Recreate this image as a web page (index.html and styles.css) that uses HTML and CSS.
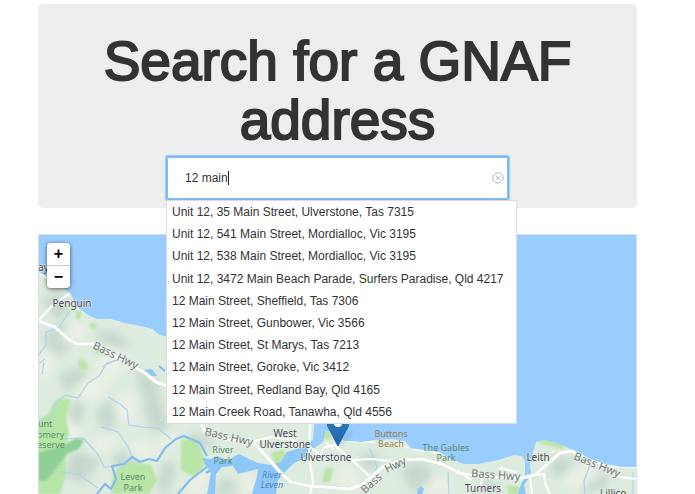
FILE: index.html
```html
<!DOCTYPE html>
<html lang="en">
<head>
<meta charset="utf-8">
<meta name="viewport" content="width=device-width, initial-scale=1">
<title>Search for a GNAF address</title>
<link rel="stylesheet" href="styles.css">
</head>
<body>
<main class="page">
  <header class="hero">
    <h1><label for="address">Search for a GNAF address</label></h1>
    <div class="search">
      <input class="search-input" id="address" type="text" value="12 main" autocomplete="off">
      <span class="caret"></span>
      <button class="clear" type="button" aria-label="Clear">
        <svg viewBox="0 0 12 12" aria-hidden="true"><circle cx="6" cy="6" r="5.2"/><path d="M4.2 4.2l3.6 3.6M7.8 4.2L4.2 7.8"/></svg>
      </button>
      <ul class="suggestions">
        <li>Unit 12, 35 Main Street, Ulverstone, Tas 7315</li>
        <li>Unit 12, 541 Main Street, Mordialloc, Vic 3195</li>
        <li>Unit 12, 538 Main Street, Mordialloc, Vic 3195</li>
        <li>Unit 12, 3472 Main Beach Parade, Surfers Paradise, Qld 4217</li>
        <li>12 Main Street, Sheffield, Tas 7306</li>
        <li>12 Main Street, Gunbower, Vic 3566</li>
        <li>12 Main Street, St Marys, Tas 7213</li>
        <li>12 Main Street, Goroke, Vic 3412</li>
        <li>12 Main Street, Redland Bay, Qld 4165</li>
        <li>12 Main Creek Road, Tanawha, Qld 4556</li>
      </ul>
    </div>
  </header>
  <section class="map" aria-label="Map">
    <svg class="map-canvas" viewBox="39 235 597 259" preserveAspectRatio="xMinYMin slice">
      <defs>
        <filter id="soft" x="-30%" y="-30%" width="160%" height="160%"><feGaussianBlur stdDeviation="4"/></filter>
        <filter id="edge"><feGaussianBlur stdDeviation="1"/></filter>
        <linearGradient id="pin" x1="0" y1="0" x2="0" y2="1"><stop offset="0" stop-color="#2e85cb"/><stop offset="1" stop-color="#2263a3"/></linearGradient>
        <path id="land" d="M38 272L55 281L64 288L71 294L74 301L78 308L88 315L97 319L110 319L125 323L140 326L152 329L160 335L172 338L230 370L290 410L314 424L313 447L322 442L323 431L332 431L333 436L346 441L362 442L374 440L392 439L405 441L411 448L424 450L440 452L450 459L464 464L478 464L498 460L514 455L522 456L525 461L525 477L529 470L532 456L536 442L545 440L562 445L575 451L590 459L605 464L620 467L637 467V494H38Z"/>
        <clipPath id="land-clip"><use href="#land"/></clipPath>
      </defs>
      <rect x="38" y="234" width="600" height="260" fill="#99ccff"/>
      <use href="#land" fill="#deebdf"/>
      <g clip-path="url(#land-clip)">
        <g filter="url(#soft)">
          <path fill="#b8cec4" opacity=".65" d="M42 300l18-8 12 18-16 10zM44 335l20-12 12 18-22 20zM92 330l26 3 14 16-26-4zM136 370l20 8 4 24-17-5zM96 407l18-5 2 23-14 6zM58 375l22-8 8 10-22 15zM142 402l18-4 9 32-17 2zM112 452l18 2 12 18-20 8zM70 405l16-6-6 26-12 2zM72 450l28 10-16 24-20-8zM164 462l12 2-8 30-12-6zM222 478l16 4-5 12h-20zM190 433l22 5-3 12-21-2zM400 470l20-10 16 14-22 20zM553 457l23 3-14 17-12-3zM590 470l20 5-6 14-24 3zM362 452l20 2-7 16-14-4zM480 480l16 2 6 12h-24z"/>
          <path fill="#f0f2e9" opacity=".8" d="M75 320l15 8-12 18-20-6zM108 348l20 10-12 18-22-6zM84 378l32-4-16 24-25 4zM118 392l20 5-5 26-16-3zM66 415l17 15-10 14-20-9zM94 438l18-3 4 12-18 7zM134 440l24 6-8 15-18-4zM44 350l13 4-7 22-12 2zM191 478l22-7-12 23h-15zM240 480l14-7v20h-12zM563 478l25-14 13 12-27 15zM336 472l16-6 8 17-19 7zM432 475l20 5-5 14h-18zM165 432l14 4-7 12-12-2z"/>
        </g>
        <g filter="url(#edge)">
          <path fill="#b5e6a6" d="M38 420L48 414L54 402L59 398L71 400L66 416L69 433L65 449L66 475L60 494H38Z"/>
          <path fill="#8fd096" d="M38 453L64 445L76 438L84 440L79 449L68 453L57 467L46 481H38Z"/>
          <path fill="#bde5aa" d="M78 363L81 357L87 364L88 370L80 369ZM76 309L82 312L80 320L76 319ZM91 322L97 324L95 330L89 327ZM95 349L107 349L104 354H96Z"/>
          <path fill="#b9e5a6" d="M113 473L130 462L151 465L157 480L149 494H112ZM181 440L196 438L198 445L205 458L205 465L194 477L181 470ZM271 453L283 450L289 457L283 468L275 465ZM325 468H333L330 482H322ZM322 431H332V438L325 440ZM434 446L451 451L460 461L450 459ZM536 442L548 439L567 446L562 449ZM507 485L520 487L519 494H509Z"/>
        </g>
        <g fill="none" stroke="#b1d0ec" stroke-width="1.2" stroke-linejoin="round">
          <path d="M38 421L52 417L55 404L65 395L78 398L88 383L99 376L107 363L118 360M108 397L120 404L127 410L129 425L142 427L158 428L171 439M101 427L118 432L128 447L132 457M62 439L83 438L97 453L104 467L112 467M53 471L78 474L98 488M38 356L46 345L46 332L58 328L70 311M38 364L45 359M102 367L115 360M42 375L44 362M298 445L309 445M370 449L377 467L372 483M448 472L449 494M590 465L584 481L585 494M633 472V494"/>
          <path stroke="#83bced" stroke-width="2.2" d="M97 494L105 484L111 489L116 479L112 466L124 464L132 457L140 462L149 459L157 461L165 448L176 439L184 436L200 443L207 456M208 466L190 480L178 494M206 473L212 469L214 490M159 366L165 371"/>
        </g>
        <path fill="#8fc6f8" d="M202 458L211 459L217 456L228 460L239 454L247 458L258 463L270 465L281 462L287 452L303 447L313 440L315 424H327L323 442L313 449L307 457L294 463L285 472L278 480L276 494H252L257 476L258 469L238 474L233 466L222 467L216 474L215 494H207L211 473L206 466ZM144 370L152 369L157 376H145ZM417 494L418 489L421 486L424 489L422 494ZM394 464L402 463L399 468H395ZM525 455H529L531 475L524 485L526 494H518L521 484L526 476Z"/>
        <g fill="none" stroke-linecap="round" stroke-linejoin="round">
          <path stroke="#d6ded6" stroke-width="4" d="M38 321L55 327L67 338L77 344L94 344L111 354L128 363L145 373L156 382L170 387L201 424L206 433L218 438L245 441L255 444L267 457L280 472L291 482L310 486L350 489L363 484L384 466L403 460L422 459L442 464L459 473L482 477L521 478L535 475L548 463L560 453L572 451L586 457L604 466L637 467"/>
          <path stroke="#fff" stroke-width="3" d="M38 272L52 280M38 321L55 327L67 338L77 344L94 344L111 354L128 363L145 373L156 382L170 387L201 424L206 433L218 438L245 441L255 444L267 457L280 472L291 482L310 486L350 489L363 484L384 466L403 460L422 459L442 464L459 473L482 477L521 478L535 475L548 463L560 453L572 451L586 457L604 466L637 467"/>
          <path stroke="#fff" stroke-width="2" d="M38 321L52 306L69 294M255 441L271 437L293 440L310 447L320 455L324 448L334 445L352 460L376 482M310 424L309 455L313 482L310 494M353 460L372 459L390 461M327 443L333 449M530 478L532 493M533 475L544 474L545 483L550 494M482 477L481 486M458 471L471 480M600 466L620 477L637 479M500 468L516 472"/>
          <path stroke="#f8faf4" stroke-width="1.5" stroke-dasharray="11 6" d="M77 309L98 317L122 321L150 328L169 336M347 441L373 442L396 443L413 450L438 453L460 463M535 458L555 451"/>
        </g>
      </g>
      <g class="town">
        <text x="38" y="271">ay</text>
        <text x="72" y="307" text-anchor="middle">Penguin</text>
        <text x="285" y="437" text-anchor="middle">West</text>
        <text x="285" y="448" text-anchor="middle">Ulverstone</text>
        <text x="326" y="461" text-anchor="middle">Ulverstone</text>
        <text x="538" y="461" text-anchor="middle">Leith</text>
        <text x="483" y="492" text-anchor="middle">Turners</text>
        <text x="600" y="497">Lillico</text>
      </g>
      <g class="road">
        <text transform="translate(92 348) rotate(26)">Bass Hwy</text>
        <text transform="translate(204 435) rotate(13)">Bass Hwy</text>
        <text transform="translate(365 494) rotate(-42)">Bass</text>
        <text transform="translate(387 473) rotate(-26)">Hwy</text>
        <text transform="translate(471 477) rotate(4)">Bass Hwy</text>
        <text transform="translate(573 459) rotate(22)">Bass Hwy</text>
      </g>
      <g class="park">
        <text x="38" y="427">unt</text>
        <text x="37" y="438">omery</text>
        <text x="37" y="448">eserve</text>
        <text x="133" y="480" text-anchor="middle">Leven</text>
        <text x="133" y="491" text-anchor="middle">Park</text>
        <text x="223" y="453" text-anchor="middle">River</text>
        <text x="223" y="464" text-anchor="middle">Park</text>
        <text x="446" y="451" text-anchor="middle">The Gables</text>
        <text x="446" y="461" text-anchor="middle">Park</text>
      </g>
      <g class="beach">
        <text x="391" y="437" text-anchor="middle">Buttons</text>
        <text x="391" y="447" text-anchor="middle">Beach</text>
      </g>
      <g class="water">
        <text x="272" y="478" text-anchor="middle">River</text>
        <text x="272" y="488" text-anchor="middle">Leven</text>
      </g>
      <path fill="#506050" opacity=".12" filter="url(#edge)" d="M338 447L346 434L354 430L352 436Z"/>
      <path fill="url(#pin)" stroke="#2a6dac" stroke-width="1" d="M338 446L328 427C324 416 329 406 338 406S352 416 348 427Z"/>
      <circle cx="338" cy="423" r="4" fill="#fff"/>
    </svg>
    <div class="zoom">
      <button type="button" aria-label="Zoom in">+</button>
      <button type="button" aria-label="Zoom out">−</button>
    </div>
  </section>
</main>
</body>
</html>
```
FILE: styles.css
```css
* {
  box-sizing: border-box;
}

body {
  margin: 0;
  background: #fff;
  color: #333;
  font-family: "Liberation Sans", Arial, sans-serif;
  font-size: 12px;
}

.page {
  display: flex;
  flex-direction: column;
  gap: 26px;
  min-height: 100vh;
  padding: 4px 58px 0 38px;
}

.hero {
  display: flex;
  flex-direction: column;
  align-items: center;
  gap: 6px;
  padding: 28px 50px 8px;
  border-radius: 5px;
  background: #eee;
}

h1 {
  margin: 0;
  font-size: 55px;
  font-weight: 400;
  line-height: 59px;
  text-align: center;
  -webkit-text-stroke: 2px #333;
}

.search {
  position: relative;
  width: 100%;
  max-width: 343px;
}

.search-input {
  display: block;
  width: 100%;
  height: 44px;
  padding: 0 28px 0 18px;
  border: 1px solid #7ab5f3;
  border-radius: 2px;
  outline: 0;
  box-shadow: inset 0 0 0 1px #86baf4, 0 0 1px 1px #9ac8f8;
  background: #fff;
  color: #333;
  font: inherit;
}

.caret {
  position: absolute;
  top: 15px;
  left: 62px;
  width: 1px;
  height: 14px;
  background: #222;
}

.clear {
  position: absolute;
  top: 16px;
  right: 5px;
  width: 12px;
  height: 12px;
  padding: 0;
  border: 0;
  background: none;
}

.clear svg {
  display: block;
  fill: none;
  stroke: #bbb;
}

.suggestions {
  position: absolute;
  z-index: 2;
  top: 100%;
  left: 0;
  display: grid;
  grid-auto-rows: 1fr;
  align-items: center;
  min-width: 351px;
  min-height: 224px;
  margin: 0;
  padding: 0 5px;
  border: 1px solid #ddd;
  background: #fff;
  list-style: none;
  line-height: 22px;
  white-space: nowrap;
}

.map {
  position: relative;
  display: flex;
  flex: 1;
  min-height: 0;
  overflow: hidden;
  border: 1px solid #ddd;
  border-bottom: 0;
  border-radius: 2px 2px 0 0;
}

.map-canvas {
  display: block;
  width: 100%;
  font-family: "Noto Sans", "Open Sans", sans-serif;
  font-size: 9px;
  paint-order: stroke;
  stroke-linejoin: round;
}

.town {
  fill: #404552;
  stroke: #eef3ec;
  stroke-width: 1px;
  font-size: 10px;
}

.road {
  fill: #70777a;
  stroke: #eef3ec;
  stroke-width: 1px;
  font-size: 11px;
}

.park {
  fill: #5c8a68;
}

.beach {
  fill: #95814e;
}

.water {
  fill: #4c87c8;
  font-style: italic;
}

.zoom {
  position: absolute;
  top: 8px;
  left: 8px;
  display: flex;
  flex-direction: column;
  border-radius: 4px;
  box-shadow: 0 1px 4px rgba(0, 0, 0, 0.6);
}

.zoom button {
  width: 23px;
  height: 22px;
  padding: 0;
  border: 0;
  border-radius: 0 0 4px 4px;
  background: #fff;
  color: #000;
  font-family: inherit;
  font-size: 16px;
  font-weight: 700;
  line-height: 22px;
}

.zoom button:first-child {
  height: 23px;
  border-bottom: 1px solid #ccc;
  border-radius: 4px 4px 0 0;
}
```
